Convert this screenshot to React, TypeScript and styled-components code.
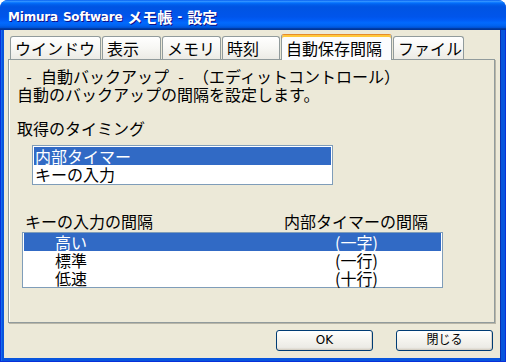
import styled, { createGlobalStyle } from "styled-components";

const GlobalStyle = createGlobalStyle`
  html, body {
    margin: 0;
    padding: 0;
    background: #ffffff;
  }
  body {
    font-family: "Noto Sans CJK JP", sans-serif;
  }
`;

const Window = styled.div`
  width: 506px;
  height: 362px;
  display: flex;
  flex-direction: column;
  border-radius: 8px 8px 0 0;
  overflow: hidden;
  background: #0855dd;
`;

const TitleBar = styled.div`
  height: 30px;
  flex: none;
  box-sizing: border-box;
  display: flex;
  align-items: center;
  padding: 3px 0 0 8px;
  background: linear-gradient(
    180deg,
    #0058ee 0%,
    #3593ff 4%,
    #288eff 6%,
    #127dff 8%,
    #036ffc 10%,
    #0262ee 14%,
    #0057e5 20%,
    #0054e3 24%,
    #0055eb 56%,
    #005bf5 66%,
    #026afe 76%,
    #0062ef 86%,
    #0052d6 92%,
    #0040ab 94%,
    #003092 100%
  );
  color: #ffffff;
  font: bold 12px "DejaVu Sans", sans-serif;
  letter-spacing: -0.2px;
  word-spacing: 1px;
  text-shadow: 1px 1px #0f1089;
  white-space: pre;
`;

const TitleCjk = styled.span`
  font-family: "Noto Sans CJK JP", sans-serif;
  font-size: 15px;
  letter-spacing: 0;
`;

const Frame = styled.div`
  flex: 1;
  display: flex;
  padding: 0 6px 4px 4px;
  background: linear-gradient(
    90deg,
    #0831d9 0 1px,
    #166aee 1px 2px,
    #0855dd 2px calc(100% - 6px),
    #0a2fb0 calc(100% - 6px) calc(100% - 5px),
    #0855dd calc(100% - 5px) calc(100% - 1px),
    #0831d9 calc(100% - 1px)
  );
  box-shadow: inset 0 -1px #0831d9;
`;

const Client = styled.div`
  flex: 1;
  display: flex;
  flex-direction: column;
  padding: 4px 5px 0 4px;
  background: #ece9d8;
`;

const TabStrip = styled.div`
  height: 25px;
  display: flex;
  align-items: flex-end;
  gap: 1px;
  padding-left: 2px;
  position: relative;
  z-index: 1;
`;

const Tab = styled.div<{ $width: number; $active?: boolean }>`
  width: ${(p) => p.$width}px;
  height: ${(p) => (p.$active ? 26 : 23)}px;
  margin-bottom: ${(p) => (p.$active ? -1 : 0)}px;
  box-sizing: border-box;
  display: flex;
  align-items: center;
  padding: ${(p) => (p.$active ? "1px" : "0")} 0 0 4px;
  border: 1px solid #919b9c;
  border-bottom: none;
  border-top-color: ${(p) => (p.$active ? "#e68b2c" : "#919b9c")};
  border-radius: 3px 3px 0 0;
  background: ${(p) =>
    p.$active
      ? "#fcfcfe"
      : "linear-gradient(180deg, #ffffff 0%, #f7f7f4 50%, #ecebe5 100%)"};
  box-shadow: ${(p) => (p.$active ? "inset 0 2px #ffc83c" : "none")};
  font-size: 16px;
  line-height: 18px;
  color: #000000;
  white-space: nowrap;
`;

const Panel = styled.div`
  height: 264px;
  box-sizing: border-box;
  border: 1px solid #919b9c;
  box-shadow: inset 1px 0 #ffffff, 1px 1px 0 #b8b6a8;
  padding: 7px 8px 0 8px;
  background: #ece9d8;
  display: flex;
  flex-direction: column;
  font-size: 16px;
  line-height: 18px;
  color: #000000;
`;

const TextLine = styled.div<{ $gap?: number }>`
  margin-top: ${(p) => p.$gap ?? 0}px;
  white-space: nowrap;
`;

const Dash = styled.span`
  display: inline-block;
  width: 24px;
  text-align: center;
`;

const ListBox = styled.div<{ $width: number; $left: number; $gap: number; $pad?: number }>`
  width: ${(p) => p.$width}px;
  margin: ${(p) => p.$gap}px 0 0 ${(p) => p.$left}px;
  box-sizing: border-box;
  border: 1px solid #7f9db9;
  background: #ffffff;
  padding: ${(p) => p.$pad ?? 0}px 1px;
`;

const ListItem = styled.div<{ $selected?: boolean }>`
  height: 18px;
  line-height: 18px;
  padding-left: 1px;
  background: ${(p) => (p.$selected ? "#316ac5" : "transparent")};
  color: ${(p) => (p.$selected ? "#ffffff" : "#000000")};
  white-space: nowrap;
`;

const ColumnHeads = styled.div`
  margin-top: 27px;
  display: grid;
  grid-template-columns: 259px auto;
  padding-left: 8px;
  white-space: nowrap;
`;

const ColumnRow = styled.div<{ $selected?: boolean }>`
  height: 18px;
  line-height: 18px;
  display: grid;
  grid-template-columns: 280px auto;
  padding-left: 31px;
  background: ${(p) => (p.$selected ? "#316ac5" : "transparent")};
  color: ${(p) => (p.$selected ? "#ffffff" : "#000000")};
  white-space: nowrap;
`;

const ButtonRow = styled.div`
  display: flex;
  justify-content: flex-end;
  gap: 23px;
  margin-top: 7px;
  padding-right: 2px;
`;

const Button = styled.button`
  width: 97px;
  height: 21px;
  box-sizing: border-box;
  padding: 0;
  border: 1px solid #003c74;
  border-radius: 3px;
  background: linear-gradient(180deg, #ffffff 0%, #f4f3ee 50%, #ecebe6 86%, #d6d0c5 100%);
  box-shadow: inset -1px -1px 0 rgba(214, 208, 197, 0.9);
  font: 12px "DejaVu Sans", "Noto Sans CJK JP", sans-serif;
  color: #000000;
  line-height: 19px;
`;

const tabs = [
  { label: "ウインドウ", width: 91 },
  { label: "表示", width: 59 },
  { label: "メモリ", width: 59 },
  { label: "時刻", width: 58 },
  { label: "自動保存間隔", width: 111, active: true },
  { label: "ファイル", width: 71 },
];

const timings = ["内部タイマー", "キーの入力"];

const intervals = [
  { key: "高い", timer: "(一字)" },
  { key: "標準", timer: "(一行)" },
  { key: "低速", timer: "(十行)" },
];

export default function App() {
  return (
    <>
      <GlobalStyle />
      <Window>
        <TitleBar>
          Mimura Software <TitleCjk>メモ帳</TitleCjk> - <TitleCjk>設定</TitleCjk>
        </TitleBar>
        <Frame>
          <Client>
            <TabStrip>
              {tabs.map((t) => (
                <Tab key={t.label} $width={t.width} $active={t.active}>
                  {t.label}
                </Tab>
              ))}
            </TabStrip>
            <Panel>
              <TextLine>
                <Dash>-</Dash>自動バックアップ<Dash>-</Dash>（エディットコントロール）
              </TextLine>
              <TextLine>自動のバックアップの間隔を設定します。</TextLine>
              <TextLine $gap={16}>取得のタイミング</TextLine>
              <ListBox $width={301} $left={15} $gap={8} $pad={1}>
                {timings.map((t, i) => (
                  <ListItem key={t} $selected={i === 0}>
                    {t}
                  </ListItem>
                ))}
              </ListBox>
              <ColumnHeads>
                <span>キーの入力の間隔</span>
                <span>内部タイマーの間隔</span>
              </ColumnHeads>
              <ListBox $width={421} $left={5} $gap={2}>
                {intervals.map((r, i) => (
                  <ColumnRow key={r.key} $selected={i === 0}>
                    <span>{r.key}</span>
                    <span>{r.timer}</span>
                  </ColumnRow>
                ))}
              </ListBox>
            </Panel>
            <ButtonRow>
              <Button>OK</Button>
              <Button>閉じる</Button>
            </ButtonRow>
          </Client>
        </Frame>
      </Window>
    </>
  );
}
